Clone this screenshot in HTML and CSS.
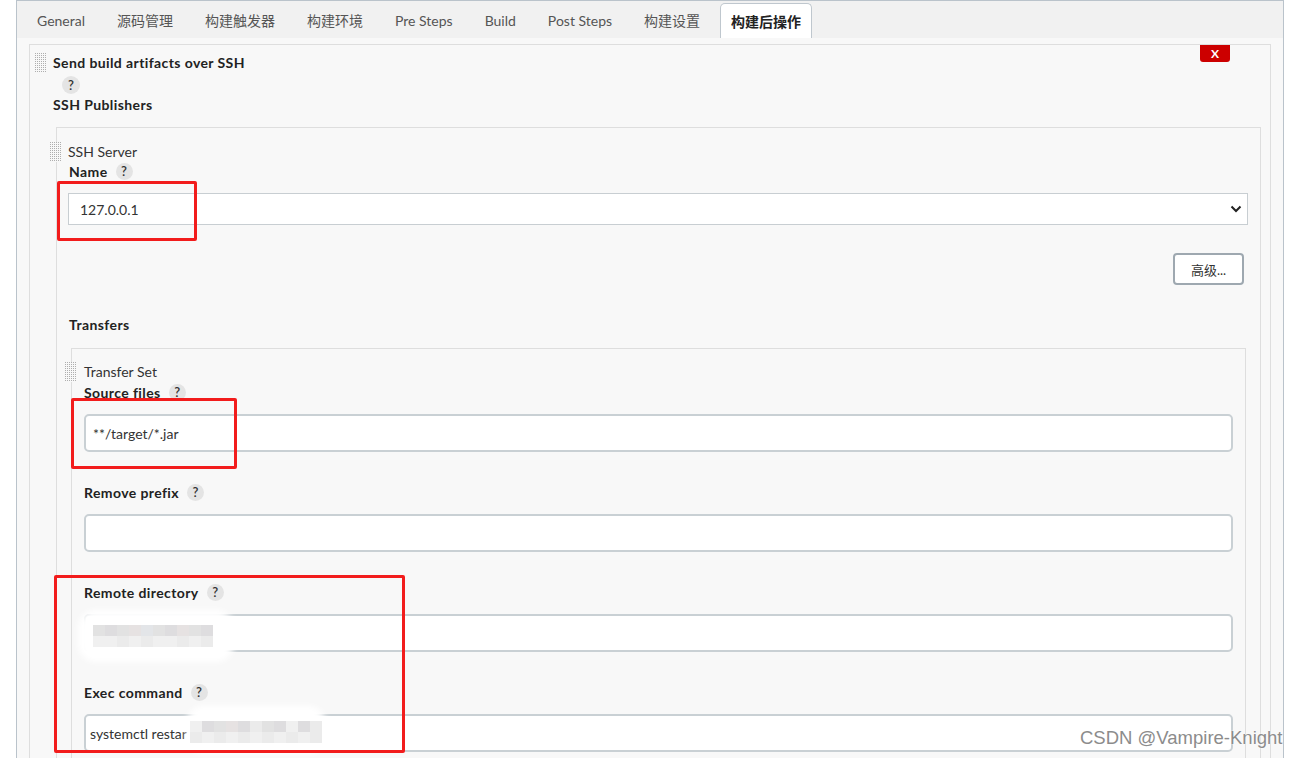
FILE: index.html
```html
<!DOCTYPE html>
<html lang="zh">
<head>
<meta charset="utf-8">
<title>Jenkins config</title>
<link rel="stylesheet" href="styles.css">
</head>
<body>
<div class="frame">
  <nav class="tabs">
    <span class="tab">General</span>
    <span class="tab">源码管理</span>
    <span class="tab">构建触发器</span>
    <span class="tab">构建环境</span>
    <span class="tab">Pre Steps</span>
    <span class="tab">Build</span>
    <span class="tab">Post Steps</span>
    <span class="tab">构建设置</span>
    <span class="tab active">构建后操作</span>
  </nav>
  <div class="content">
    <section class="block">
      <span class="del">X</span>
      <div class="head"><span class="grip"></span><span class="title">Send build artifacts over SSH</span></div>
      <div class="block-body">
        <span class="help help-top">?</span>
        <div class="label">SSH Publishers</div>
        <div class="server">
          <div class="head head-server"><span class="grip"></span><span class="caption">SSH Server</span></div>
          <div class="field-label first"><span>Name</span><span class="help">?</span></div>
          <div class="select"><span>127.0.0.1</span>
            <svg width="12" height="8" viewBox="0 0 12 8"><path d="M1.5 1.5 L6 6 L10.5 1.5" fill="none" stroke="#222" stroke-width="2"/></svg>
          </div>
          <div class="btn-row"><span class="btn">高级...</span></div>
          <div class="label transfers">Transfers</div>
          <div class="transfer">
            <div class="head head-transfer"><span class="grip"></span><span class="caption">Transfer Set</span></div>
            <div class="field-label tfirst"><span>Source files</span><span class="help">?</span></div>
            <div class="input">**/target/*.jar</div>
            <div class="field-label"><span>Remove prefix</span><span class="help">?</span></div>
            <div class="input"></div>
            <div class="field-label"><span>Remote directory</span><span class="help">?</span></div>
            <div class="input"></div>
            <div class="field-label"><span>Exec command</span><span class="help">?</span></div>
            <div class="input exec">systemctl restar</div>
          </div>
        </div>
      </div>
    </section>
  </div>
</div>

<div class="blob blob-remote"></div>
<div class="mosaic mosaic-remote">
  <i class="m1"></i><i class="m2"></i><i class="m1"></i><i class="m3"></i><i class="m4"></i><i class="m1"></i><i class="m2"></i><i class="m3"></i><i class="m1"></i><i class="m2"></i>
  <i class="m5"></i><i class="m5"></i><i class="m6"></i><i class="m5"></i><i class="m6"></i><i class="m5"></i><i class="m5"></i><i class="m6"></i><i class="m5"></i><i class="m6"></i>
</div>
<div class="blob blob-exec"></div>
<div class="mosaic mosaic-exec">
  <i class="m5"></i><i class="m2"></i><i class="m1"></i><i class="m3"></i><i class="m2"></i><i class="m6"></i><i class="m1"></i><i class="m2"></i><i class="m5"></i><i class="m2"></i><i class="m6"></i>
  <i class="m6"></i><i class="m5"></i><i class="m6"></i><i class="m5"></i><i class="m6"></i><i class="m5"></i><i class="m6"></i><i class="m5"></i><i class="m6"></i><i class="m5"></i><i class="m6"></i>
</div>

<div class="mark mark-name"></div>
<div class="mark mark-source"></div>
<div class="mark mark-remote"></div>

<div class="watermark">CSDN @Vampire-Knight</div>
</body>
</html>
```

FILE: styles.css
```css
html, body {
  margin: 0;
  padding: 0;
  height: 758px;
  overflow: hidden;
  background: #ffffff;
}
body {
  position: relative;
  font-family: Lato, "Noto Sans CJK SC", sans-serif;
  font-size: 13px;
  color: #333;
}
.frame {
  margin-left: 16px;
  width: 1268px;
  height: 758px;
  box-sizing: border-box;
  border: 1px solid #bac3cb;
  border-bottom: none;
  background: #f8f8f8;
}
.tabs {
  display: flex;
  align-items: flex-end;
  height: 37px;
  padding-left: 4px;
  background: #f1f1f1;
}
.tab {
  height: 35px;
  line-height: 35px;
  padding: 0 16px;
  font-size: 14px;
  color: #555;
}
.tab.active {
  margin-left: 4px;
  padding: 0 10px;
  background: #fff;
  border: 1px solid #bfc7ce;
  border-bottom: none;
  border-radius: 5px 5px 0 0;
  color: #222;
  font-weight: 700;
  height: 35px;
  box-sizing: border-box;
}
.content {
  padding: 6px 12px 0;
}
.block {
  position: relative;
  border: 1px solid #dedede;
  background: #f8f8f8;
  padding: 8px 0 0 5px;
  height: 760px;
}
.del {
  position: absolute;
  top: 0;
  right: 40px;
  width: 30px;
  height: 17px;
  background: #cc0000;
  color: #fff;
  font-weight: 700;
  font-size: 12px;
  line-height: 17px;
  text-align: center;
  border-radius: 0 0 3px 3px;
}
.head {
  display: flex;
  align-items: center;
  gap: 7px;
  height: 20px;
}
.grip {
  display: block;
  width: 11px;
  height: 20px;
  background:
    linear-gradient(90deg, transparent 50%, #f8f8f8 50%) 0 0 / 2px 2px,
    linear-gradient(transparent 50%, #f8f8f8 50%) 0 0 / 2px 2px,
    #aeaeae;
}
.title {
  font-weight: 700;
  font-size: 14px;
  letter-spacing: 0.4px;
  line-height: 20px;
  color: #222;
}
.block-body {
  padding: 0 9px 0 18px;
}
.help {
  display: inline-flex;
  align-items: center;
  justify-content: center;
  width: 17px;
  height: 17px;
  border-radius: 50%;
  background: #e4e4e4;
  color: #333;
  font-size: 13px;
  font-weight: 600;
  letter-spacing: 0;
}
.help-top {
  display: flex;
  width: 18px;
  height: 18px;
  margin: 3px 0 0 9px;
}
.label {
  font-weight: 700;
  font-size: 14px;
  letter-spacing: 0.4px;
  line-height: 18px;
  margin-top: 2px;
  color: #222;
}
.server {
  margin: 13px 0 0 3px;
  border: 1px solid #dedede;
  padding: 14px 12px 0 11px;
  height: 700px;
}
.head-server {
  margin-left: -18px;
}
.caption {
  font-size: 14px;
  line-height: 20px;
  color: #333;
}
.field-label {
  display: flex;
  align-items: center;
  gap: 8px;
  height: 18px;
  margin-top: 31px;
  font-weight: 700;
  font-size: 14px;
  letter-spacing: 0.4px;
  color: #222;
}
.field-label.first {
  margin-top: 0;
  padding-left: 1px;
}
.field-label.tfirst {
  margin-top: 1px;
}
.select {
  margin-top: 13px;
  height: 32px;
  box-sizing: border-box;
  border: 1px solid #c8ced2;
  background: #fff;
  display: flex;
  align-items: center;
  justify-content: space-between;
  padding: 0 5px 0 11px;
  font-size: 14px;
  color: #333;
}
.btn-row {
  display: flex;
  justify-content: flex-end;
  margin-top: 28px;
  padding-right: 4px;
}
.btn {
  width: 71px;
  height: 32px;
  box-sizing: border-box;
  border: 2px solid #9ea8b0;
  border-radius: 4px;
  background: #fff;
  display: flex;
  align-items: center;
  justify-content: center;
  font-size: 13px;
  color: #333;
}
.label.transfers {
  margin-top: 31px;
  padding-left: 1px;
}
.transfer {
  margin: 14px 2px 0 3px;
  border: 1px solid #dedede;
  padding: 13px 12px 0 12px;
  height: 500px;
}
.head-transfer {
  margin-left: -19px;
  gap: 8px;
}
.input {
  margin-top: 13px;
  height: 38px;
  box-sizing: border-box;
  border: 2px solid #c9d0d4;
  border-radius: 5px;
  background: #fff;
  display: flex;
  align-items: center;
  padding-left: 7px;
  font-size: 14px;
  color: #333;
}
.input.exec {
  padding-left: 4px;
}
.blob {
  position: absolute;
  background: #fff;
  filter: blur(3px);
  border-radius: 18px;
}
.blob-remote {
  left: 78px;
  top: 610px;
  width: 156px;
  height: 52px;
}
.blob-exec {
  left: 186px;
  top: 706px;
  width: 140px;
  height: 48px;
}
.mosaic {
  position: absolute;
  display: grid;
  grid-auto-rows: 11px;
}
.mosaic-remote {
  left: 93px;
  top: 625px;
  grid-template-columns: repeat(10, 12px);
}
.mosaic-exec {
  left: 190px;
  top: 721px;
  grid-template-columns: repeat(11, 12px);
}
.m1 { background: #e2e2e2; }
.m2 { background: #dedddf; }
.m3 { background: #e6e2e2; }
.m4 { background: #e3e5e8; }
.m5 { background: #f0f0f0; }
.m6 { background: #ebebeb; }
.mark {
  position: absolute;
  border: 3px solid #f21c1c;
  border-radius: 2px;
  box-sizing: border-box;
}
.mark-name {
  left: 57px;
  top: 181px;
  width: 140px;
  height: 60px;
}
.mark-source {
  left: 71px;
  top: 398px;
  width: 166px;
  height: 71px;
}
.mark-remote {
  left: 54px;
  top: 575px;
  width: 351px;
  height: 178px;
}
.watermark {
  position: absolute;
  left: 1080px;
  top: 727px;
  font-family: "Liberation Sans", Arial, sans-serif;
  font-size: 18.5px;
  color: #8c8c8c;
  text-shadow: 0 0 1px #fff, 0 0 2px #fff;
  white-space: nowrap;
}
```
